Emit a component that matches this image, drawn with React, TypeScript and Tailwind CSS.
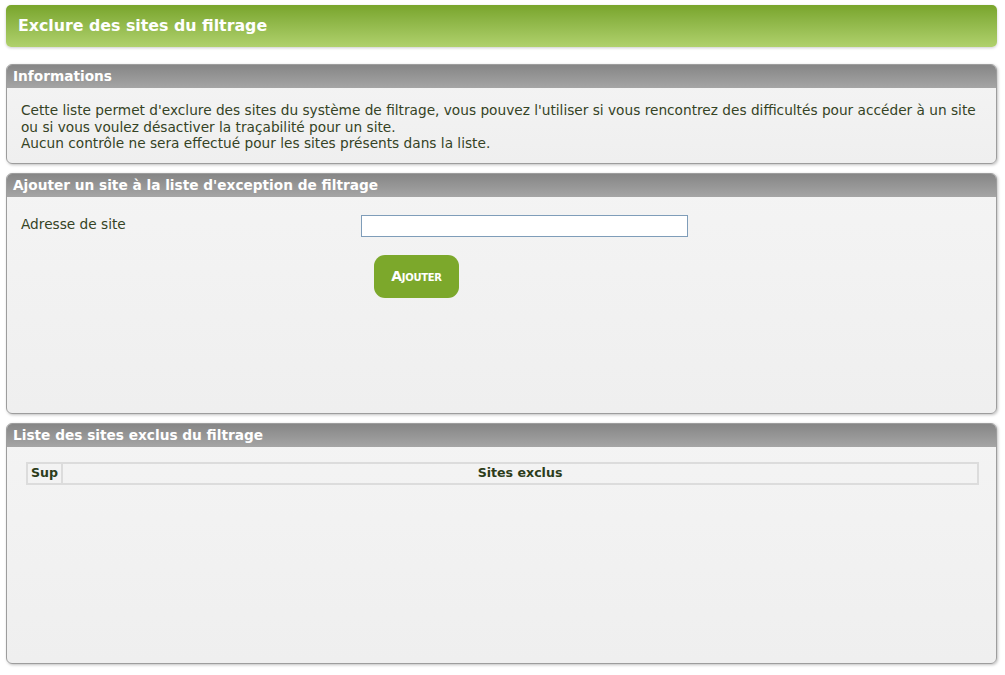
import React from 'react';

const font = { fontFamily: '"DejaVu Sans", Verdana, sans-serif' };

function Panel({ title, className, children }: { title: string; className?: string; children: React.ReactNode }) {
  return (
    <div className={`rounded-[6px] border border-[#9d9d9d] bg-gradient-to-b from-[#f4f4f4] to-[#efefef] shadow-[1px_1px_3px_rgba(0,0,0,0.25)] overflow-hidden ${className ?? ''}`}>
      <div className="h-[23px] bg-gradient-to-b from-[#868686] to-[#a5a5a5] px-[6px] text-[13.7px] font-bold leading-[23px] text-white">
        {title}
      </div>
      {children}
    </div>
  );
}

export default function App() {
  return (
    <div className="min-h-[675px] bg-white pl-[6px] pr-[8px] pt-[5px]" style={font}>
      <div className="h-[42px] rounded-[5px] bg-gradient-to-b from-[#79a52b] to-[#b0d16c] pl-[12px] text-[15.8px] font-bold leading-[42px] text-white shadow-[0_1px_3px_rgba(0,0,0,0.2)]">
        Exclure des sites du filtrage
      </div>

      <div className="mt-[17px] flex flex-col gap-[9px]">
        <Panel title="Informations" className="h-[100px]">
          <div className="px-[14px] pt-[14px] text-[13.7px] leading-[16.5px] text-[#354325]">
            Cette liste permet d'exclure des sites du système de filtrage, vous pouvez l'utiliser si vous rencontrez des difficultés pour accéder à un site
            <br />
            ou si vous voulez désactiver la traçabilité pour un site.
            <br />
            Aucun contrôle ne sera effectué pour les sites présents dans la liste.
          </div>
        </Panel>

        <Panel title="Ajouter un site à la liste d'exception de filtrage" className="h-[241px]">
          <div className="flex pl-[14px] pt-[18px]">
            <div className="mt-[1px] w-[340px] text-[13.7px] leading-[16px] text-[#354325]">Adresse de site</div>
            <input type="text" className="h-[22px] w-[327px] border border-[#7f9db9] bg-white outline-none" />
          </div>
          <div className="pl-[367px] pt-[18px]">
            <button className="h-[43px] w-[85px] rounded-[11px] bg-[#7ca82b] text-[14px] font-bold tracking-[-0.3px] text-white [font-variant:small-caps]">
              Ajouter
            </button>
          </div>
        </Panel>

        <Panel title="Liste des sites exclus du filtrage" className="h-[241px]">
          <div className="pl-[19px] pr-[17px] pt-[15px]">
            <table className="w-full border-collapse border-2 border-[#dcdcdc] text-[12.6px] text-[#2d3d1b]">
              <thead>
                <tr className="h-[20px]">
                  <th className="w-[34px] border-r-2 border-[#dcdcdc] px-[3px] text-left font-bold">Sup</th>
                  <th className="text-center font-bold">Sites exclus</th>
                </tr>
              </thead>
            </table>
          </div>
        </Panel>
      </div>
    </div>
  );
}
